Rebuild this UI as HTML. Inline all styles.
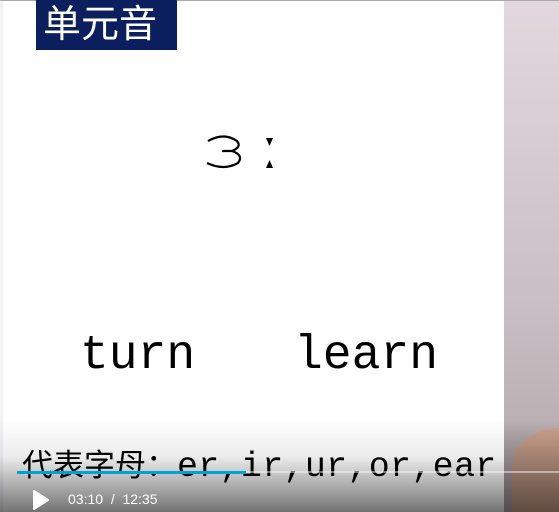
<!DOCTYPE html>
<html><head><meta charset="utf-8"><style>
*{margin:0;padding:0}
html,body{width:559px;height:512px;overflow:hidden}
body{background:#fff;position:relative;font-family:"Liberation Sans","Noto Sans CJK SC",sans-serif}
.abs{position:absolute}
#w{position:absolute;left:0;top:0;width:559px;height:512px;overflow:hidden}
</style></head><body><div id="w">
<div class="abs" style="left:0;top:0;width:559px;height:1px;background:#aaa"></div>
<div class="abs" style="left:0;top:1px;width:3px;height:511px;background:#f2f3f6"></div>
<div class="abs" style="left:504px;top:1px;width:55px;height:511px;background:linear-gradient(#e2d8dd,#c8bec3 60%,#b0a5a7)"></div>
<div class="abs" style="left:512px;top:428px;width:47px;height:84px;border-top-left-radius:60px 50px;background:#cfa58f"></div>
<div class="abs" style="left:36px;top:0;width:141px;height:50px;background:#0b1f5e"></div>
<div class="abs" style="left:43px;top:-2px;color:#fff;font-size:38px;line-height:46px;font-family:'Noto Sans CJK SC',sans-serif">单元音</div>
<svg class="abs" style="left:204px;top:134px" width="72" height="36">
<path d="M4 7 Q20 -2 33 7 Q38 13 28 17 L18 17 M28 17 Q40 21 34 29 Q20 37 3 29" fill="none" stroke="#000" stroke-width="2.2"/>
<path d="M62 4 L69 4 L65.5 12 Z M62 34 L69 34 L65.5 26 Z" fill="#000"/>
</svg>
<div class="abs" style="left:80px;top:328px;font-size:48px;line-height:56px;font-family:'Liberation Mono',monospace;color:#000">turn</div>
<div class="abs" style="left:294px;top:328px;font-size:48px;line-height:56px;font-family:'Liberation Mono',monospace;color:#000">learn</div>
<div class="abs" style="left:0;top:420px;width:504px;height:92px;background:linear-gradient(rgba(0,0,0,0),rgba(0,0,0,0.08) 40%,rgba(0,0,0,0.55))"></div>
<div class="abs" style="left:504px;top:420px;width:55px;height:92px;background:linear-gradient(rgba(0,0,0,0),rgba(0,0,0,0.55))"></div>
<div class="abs" style="left:22px;top:443px;font-size:31px;line-height:40px;color:#000;white-space:nowrap"><span style="font-family:'Noto Sans CJK SC',sans-serif">代表字母：</span><span style="font-family:'Liberation Mono',monospace;font-size:35px;letter-spacing:0.3px">er,ir,ur,or,ear</span></div>
<div class="abs" style="left:17px;top:471px;width:542px;height:2px;background:rgba(255,255,255,0.45)"></div>
<div class="abs" style="left:17px;top:471px;width:229px;height:3px;background:#00a1d6"></div>
<svg class="abs" style="left:32px;top:489px" width="18" height="22"><path d="M2 2 L16 11 L2 20 Z" fill="#fff" stroke="#fff" stroke-width="2" stroke-linejoin="round"/></svg>
<div class="abs" style="left:68px;top:491px;color:#fff;font-size:14px;line-height:16px">03:10 &nbsp;/&nbsp; 12:35</div>
</div></body></html>
